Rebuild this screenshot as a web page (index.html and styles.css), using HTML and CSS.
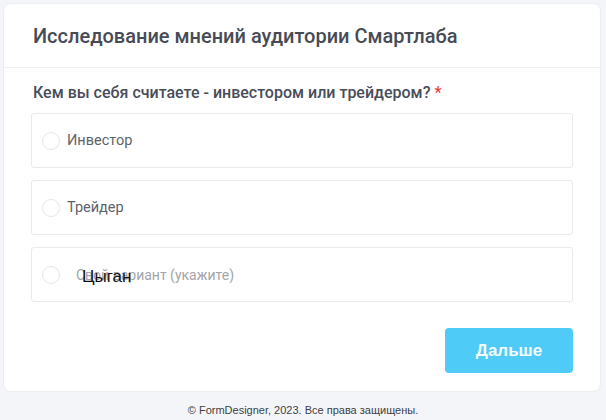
FILE: index.html
```html
<!DOCTYPE html>
<html lang="ru">
<head>
<meta charset="utf-8">
<title>Исследование мнений аудитории Смартлаба</title>
<link rel="stylesheet" href="styles.css">
</head>
<body>
<div class="card">
  <div class="card-header">
    <h1 class="title">Исследование мнений аудитории Смартлаба</h1>
  </div>
  <div class="card-body">
    <div class="question">Кем вы себя считаете - инвестором или трейдером? <span class="req">*</span></div>
    <div class="options">
      <label class="option"><span class="radio"></span><span class="opt-text">Инвестор</span></label>
      <label class="option"><span class="radio"></span><span class="opt-text">Трейдер</span></label>
      <label class="option other"><span class="radio"></span><span class="other-field"><span class="placeholder">Свой вариант (укажите)</span><span class="typed">Цыган</span></span></label>
    </div>
    <div class="actions">
      <button class="btn">Дальше</button>
    </div>
  </div>
</div>
<div class="footer">© FormDesigner, 2023. Все права защищены.</div>
</body>
</html>
```
FILE: styles.css
```css
html, body {
  margin: 0;
  padding: 0;
}
body {
  background: #f4f5f9;
  font-family: Roboto, "Liberation Sans", sans-serif;
  width: 606px;
  height: 420px;
  overflow: hidden;
}
.card {
  margin: 3px 5px 0 3px;
  background: #fff;
  border: 1px solid #eceef3;
  border-radius: 8px;
  height: 389px;
  box-sizing: border-box;
}
.card-header {
  padding: 20px 29px 0 29px;
  height: 64px;
  box-sizing: border-box;
  border-bottom: 1px solid #eef0f4;
}
.title {
  margin: 0;
  font-size: 20px;
  line-height: 24px;
  font-weight: 500;
  color: #474b56;
}
.card-body {
  padding: 15px 27px 0 27px;
}
.question {
  font-size: 16px;
  line-height: 20px;
  font-weight: 500;
  color: #484d59;
  padding-left: 2px;
}
.req {
  color: #e53e3e;
}
.options {
  margin-top: 10px;
  display: flex;
  flex-direction: column;
  gap: 12px;
}
.option {
  display: flex;
  align-items: center;
  height: 55px;
  box-sizing: border-box;
  border: 1px solid #e9eaee;
  border-radius: 3px;
  padding-left: 10px;
}
.radio {
  width: 18px;
  height: 18px;
  box-sizing: border-box;
  border: 1px solid #e6e7ea;
  border-radius: 50%;
  flex: none;
}
.opt-text {
  margin-left: 7px;
  font-size: 14.5px;
  color: #606369;
}
.other-field {
  position: relative;
  margin-left: 16px;
  font-size: 14px;
  color: #a3a5aa;
}
.typed {
  position: absolute;
  left: 6px;
  top: 0px;
  font-family: "Liberation Sans", Arial, sans-serif;
  font-size: 17px;
  color: #111;
}
.actions {
  display: flex;
  justify-content: flex-end;
  margin-top: 26px;
}
.btn {
  width: 128px;
  height: 45px;
  border: none;
  border-radius: 4px;
  background: #4fcbf8;
  color: #f2fbff;
  font-family: "Liberation Sans", Arial, sans-serif;
  font-weight: bold;
  font-size: 17px;
  padding: 0;
}
.footer {
  text-align: center;
  font-family: "Liberation Sans", Arial, sans-serif;
  font-size: 11px;
  color: #3d3f44;
  margin-top: 12px;
}
```
